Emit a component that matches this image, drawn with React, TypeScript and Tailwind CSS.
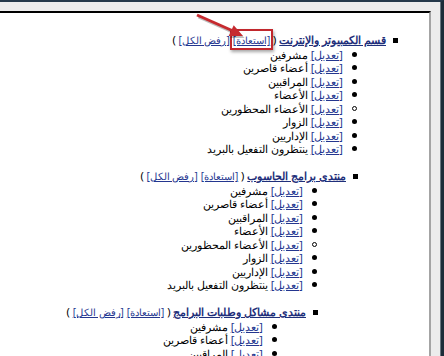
import React from 'react';

const items = [
  { label: 'مشرفين' },
  { label: 'أعضاء قاصرين' },
  { label: 'المراقبين' },
  { label: 'الأعضاء' },
  { label: 'الأعضاء المحظورين', hollow: true },
  { label: 'الزوار' },
  { label: 'الإداريين' },
  { label: 'ينتظرون التفعيل بالبريد' },
];

const groups = [
  { title: 'قسم الكمبيوتر والإنترنت', indent: 'pr-0', mark: true },
  { title: 'منتدى برامج الحاسوب', indent: 'pr-[40px]', mark: false },
  { title: 'منتدى مشاكل وطلبات البرامج', indent: 'pr-[80px]', mark: false },
];

const Link: React.FC<{ children: React.ReactNode; bold?: boolean; small?: boolean }> = ({ children, bold, small }) => (
  <a
    href="#"
    className={
      bold
        ? 'font-bold text-[#1f2f7a] underline'
        : small
          ? 'text-[10px] text-[#24368f] underline'
          : 'text-[#24368f] underline'
    }
  >
    {children}
  </a>
);

const App: React.FC = () => {
  return (
    <div className="relative flex h-[356px] w-[444px] flex-col overflow-hidden border-t-2 border-r-[3px] border-t-[#25384a] border-r-[#1d2c39] bg-[#ececec] font-['Noto_Sans',sans-serif]">
      <div className="h-[2px] bg-[#a9b6c0]" />
      <div className="flex flex-1 border-r border-r-[#6b7680] pt-[9px] pr-[9px]">
        <div
          dir="rtl"
          className="flex-1 border-t-2 border-r-2 border-t-black border-r-[#a4a4a4] bg-white pt-5 text-[11px] leading-[13.5px] text-black"
        >
          {groups.map((g) => (
            <div key={g.title} className={`${g.indent} mb-[13.5px]`}>
              <div className="flex items-center pr-[31px]">
                <span className="ml-[7px] h-[5px] w-[5px] shrink-0 bg-black" />
                <span className="whitespace-nowrap">
                  <Link bold>{g.title}</Link>
                  {' ( '}
                  <span className="relative">
                    <Link small>[استعادة]</Link>
                    {g.mark && (
                      <span className="absolute -top-[3px] -bottom-[3px] -left-[3px] -right-[3px] border-2 border-[#c1272d] shadow-[1px_2px_3px_rgba(0,0,0,0.35)]" />
                    )}
                  </span>{' '}
                  <Link small>[رفض الكل]</Link>
                  {' )'}
                </span>
              </div>
              {items.map((it) => (
                <div key={it.label} className="flex items-center pr-[72px]">
                  <span
                    className={
                      it.hollow
                        ? 'ml-[9px] h-[5px] w-[5px] shrink-0 rounded-full border border-black'
                        : 'ml-[9px] h-[5px] w-[5px] shrink-0 rounded-full bg-black'
                    }
                  />
                  <span className="whitespace-nowrap">
                    <Link>[تعديل]</Link> {it.label}
                  </span>
                </div>
              ))}
            </div>
          ))}
        </div>
      </div>
      <svg className="pointer-events-none absolute left-0 top-0" width="444" height="60">
        <g transform="translate(1.5 2)" fill="#000" stroke="#000" opacity="0.25">
          <line x1="197" y1="13" x2="232" y2="28.5" strokeWidth="3" />
          <polygon points="243,34 228.7,34 233.7,23.2" stroke="none" />
        </g>
        <line x1="197" y1="13" x2="232" y2="28.5" stroke="#c62a2f" strokeWidth="3" />
        <polygon points="243,34 228.7,34 233.7,23.2" fill="#c62a2f" />
      </svg>
    </div>
  );
};

export default App;
